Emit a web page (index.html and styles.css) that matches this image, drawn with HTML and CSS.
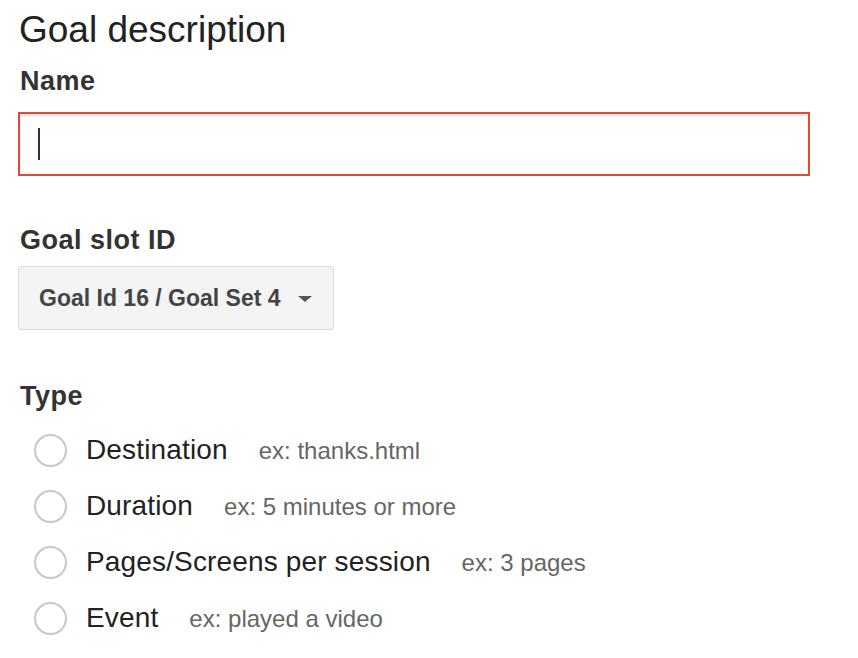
FILE: index.html
```html
<!DOCTYPE html>
<html>
<head>
<meta charset="utf-8">
<link rel="stylesheet" href="styles.css">
</head>
<body>
<div class="form">
  <h1 class="title">Goal description</h1>
  <div class="label name-label">Name</div>
  <div class="input"><span class="caret"></span></div>
  <div class="label slot-label">Goal slot ID</div>
  <div class="select">
    <span class="select-text">Goal Id 16 / Goal Set 4</span>
    <span class="arrow"></span>
  </div>
  <div class="label type-label">Type</div>
  <ul class="options">
    <li class="option"><span class="radio"></span><span class="opt-text"><span class="opt-name">Destination</span><span class="opt-hint">ex: thanks.html</span></span></li>
    <li class="option"><span class="radio"></span><span class="opt-text"><span class="opt-name">Duration</span><span class="opt-hint">ex: 5 minutes or more</span></span></li>
    <li class="option"><span class="radio"></span><span class="opt-text"><span class="opt-name">Pages/Screens per session</span><span class="opt-hint">ex: 3 pages</span></span></li>
    <li class="option"><span class="radio"></span><span class="opt-text"><span class="opt-name">Event</span><span class="opt-hint">ex: played a video</span></span></li>
  </ul>
</div>
</body>
</html>
```
FILE: styles.css
```css
* { box-sizing: border-box; }
body {
  margin: 0;
  background: #fff;
  font-family: "Liberation Sans", Arial, sans-serif;
  color: #222;
}
.form {
  padding: 8px 0 0 18px;
  display: flex;
  flex-direction: column;
  align-items: flex-start;
}
.title {
  margin: 0 0 0 1px;
  font-size: 37px;
  font-weight: 400;
  line-height: 44px;
  color: #222;
}
.label {
  margin-left: 2px;
  font-size: 27px;
  font-weight: 700;
  letter-spacing: 0.5px;
  color: #333;
  line-height: 30px;
}
.name-label { margin-top: 14px; }
.input {
  margin-top: 16px;
  width: 792px;
  height: 64px;
  border: 2px solid #dd4b39;
  box-shadow: inset 0 2px 3px rgba(0,0,0,0.12);
  padding: 14px 0 0 18px;
}
.caret {
  display: block;
  width: 2px;
  height: 32px;
  background: #333;
}
.slot-label { margin-top: 49px; }
.select {
  margin-top: 11px;
  height: 64px;
  width: 316px;
  border: 1px solid #dcdcdc;
  border-radius: 3px;
  background: #f4f4f4;
  display: flex;
  align-items: center;
  padding: 0 0 0 20px;
}
.select-text {
  font-size: 23px;
  font-weight: 700;
  color: #444;
}
.arrow {
  margin-left: 17px;
  margin-top: 2px;
  width: 0;
  height: 0;
  border-left: 7px solid transparent;
  border-right: 7px solid transparent;
  border-top: 6px solid #555;
}
.type-label { margin-top: 51px; }
.options {
  list-style: none;
  margin: 11px 0 0 0;
  padding: 0 0 0 16px;
}
.option {
  display: flex;
  align-items: center;
  height: 56px;
}
.radio {
  width: 33px;
  height: 33px;
  border: 2px solid #c8c8c8;
  border-radius: 50%;
  margin-right: 19px;
  flex: none;
}
.opt-text {
  display: flex;
  align-items: baseline;
}
.opt-name {
  font-size: 28px;
  letter-spacing: 0.15px;
  color: #222;
}
.opt-hint {
  margin-left: 31px;
  font-size: 24px;
  color: #666;
}
```
